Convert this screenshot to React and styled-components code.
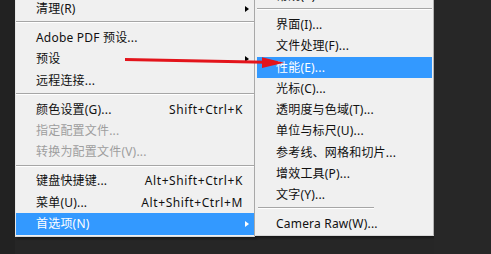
import React from "react";
import styled, { createGlobalStyle } from "styled-components";

const Global = createGlobalStyle`
  html, body { margin: 0; padding: 0; background: #262626; }
  body { overflow: hidden; }
`;

const Page = styled.div`
  position: relative;
  width: 491px;
  height: 254px;
  overflow: hidden;
  display: flex;
  align-items: flex-start;
  background: #262626;
  font-family: "Noto Sans", "Noto Sans CJK SC", sans-serif;
  font-size: 12px;
`;

const Strip = styled.div`
  width: 15px;
  height: 254px;
  flex: none;
  background: #222222;
`;

const Menu = styled.div`
  flex: none;
  width: ${(p) => p.$width}px;
  box-sizing: border-box;
  margin-top: ${(p) => p.$top}px;
  padding: 0 ${(p) => p.$pad}px 1px;
  background: #f0f0f0;
  border-left: 1px solid ${(p) => p.$leftBorder};
  border-right: 1px solid ${(p) => p.$rightBorder};
  border-bottom: 1px solid #d8d8d8;
  box-shadow: 2px 2px 2px rgba(0, 0, 0, 0.35);
`;

const Item = styled.div`
  display: flex;
  align-items: center;
  height: ${(p) => p.$h}px;
  padding-left: ${(p) => p.$indent}px;
  color: ${(p) => (p.$active ? "#ffffff" : p.$disabled ? "#9e9e9e" : "#111111")};
  background: ${(p) => (p.$active ? "#3399ff" : "transparent")};
  line-height: 14px;
  white-space: nowrap;
`;

const Label = styled.span`
  flex: 1;
  letter-spacing: 0.2px;
`;

const Shortcut = styled.span`
  letter-spacing: 0.6px;
`;

const ArrowSlot = styled.span`
  width: 11px;
  flex: none;
  display: flex;
  align-items: center;
`;

const SubArrow = styled.span`
  margin-left: 2px;
  width: 0;
  height: 0;
  border-left: 4px solid ${(p) => (p.$active ? "#ffffff" : "#000000")};
  border-top: 3.5px solid transparent;
  border-bottom: 3.5px solid transparent;
`;

const Separator = styled.div`
  height: 1px;
  background: #a6a6a6;
  border-bottom: 1px solid #ffffff;
  margin: 1.5px ${(p) => p.$right || 0}px 4px ${(p) => p.$left || 0}px;
`;

const Rest = styled.div`
  flex: 1;
  height: 254px;
  background: #272727;
`;

const Overlay = styled.svg`
  position: absolute;
  left: 0;
  top: 0;
  pointer-events: none;
`;

const LEFT_H = 21.4;
const SUB_H = 21.25;

function Row({ h, indent, label, shortcut, arrow, active, disabled, trailing }) {
  return (
    <Item $h={h} $indent={indent} $active={active} $disabled={disabled}>
      <Label>{label}</Label>
      {shortcut && <Shortcut>{shortcut}</Shortcut>}
      {trailing && <ArrowSlot>{arrow && <SubArrow $active={active} />}</ArrowSlot>}
    </Item>
  );
}

const leftMenu = [
  { label: "清理(R)", arrow: true },
  "sep",
  { label: "Adobe PDF 预设..." },
  { label: "预设", arrow: true },
  { label: "远程连接..." },
  "sep",
  { label: "颜色设置(G)...", shortcut: "Shift+Ctrl+K" },
  { label: "指定配置文件...", disabled: true },
  { label: "转换为配置文件(V)...", disabled: true },
  "sep",
  { label: "键盘快捷键...", shortcut: "Alt+Shift+Ctrl+K" },
  { label: "菜单(U)...", shortcut: "Alt+Shift+Ctrl+M" },
  { label: "首选项(N)", arrow: true, active: true },
];

const subMenu = [
  { label: "常规(K)..." },
  "sep",
  { label: "界面(I)..." },
  { label: "文件处理(F)..." },
  { label: "性能(E)...", active: true },
  { label: "光标(C)..." },
  { label: "透明度与色域(T)..." },
  { label: "单位与标尺(U)..." },
  { label: "参考线、网格和切片..." },
  { label: "增效工具(P)..." },
  { label: "文字(Y)..." },
  "sep2",
  { label: "Camera Raw(W)..." },
];

export default function App() {
  return (
    <>
      <Global />
      <Page>
        <Strip />
        <Menu $width={240} $top={-1.7} $pad={0} $leftBorder="#e6e6e6" $rightBorder="#a8a8a8">
          {leftMenu.map((it, i) =>
            it === "sep" ? (
              <Separator key={i} />
            ) : (
              <Row key={i} h={LEFT_H} indent={20} trailing {...it} />
            )
          )}
        </Menu>
        <Menu $width={179} $top={-14.35} $pad={1} $leftBorder="#f0f0f0" $rightBorder="#b4b4b4">
          {subMenu.map((it, i) =>
            it === "sep" ? (
              <Separator key={i} />
            ) : it === "sep2" ? (
              <Separator key={i} $left={1} $right={58} />
            ) : (
              <Row key={i} h={SUB_H} indent={19} {...it} />
            )
          )}
        </Menu>
        <Rest />
        <Overlay width="491" height="254" viewBox="0 0 491 254">
          <line x1="125" y1="59.5" x2="266" y2="62.3" stroke="#e3141b" strokeWidth="3" />
          <polygon points="262,57.2 284,62.7 262,68" fill="#e3141b" />
        </Overlay>
      </Page>
    </>
  );
}
